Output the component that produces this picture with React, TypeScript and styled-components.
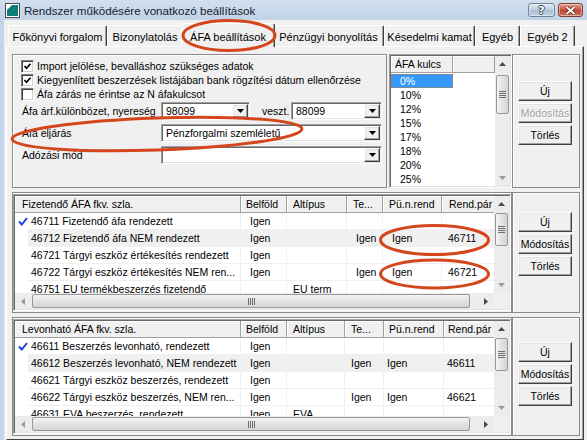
import React from 'react';
import styled, { createGlobalStyle, css } from 'styled-components';

const GlobalStyle = createGlobalStyle`
  html, body {
    margin: 0;
    padding: 0;
    background: #f0f0f0;
  }
  body {
    font-family: "Liberation Sans", Arial, sans-serif;
    font-size: 10.5px;
    color: #000;
  }
  * {
    box-sizing: border-box;
  }
`;

const sunken = css`
  border: 1px solid;
  border-color: #a0a0a0 #ffffff #ffffff #a0a0a0;
  box-shadow: inset 1px 1px #696969, inset -1px -1px #e3e3e3;
  padding: 1px;
`;

const raised = css`
  border: 1px solid;
  border-color: #ffffff #404040 #404040 #ffffff;
  box-shadow: inset -1px -1px #a0a0a0, inset 1px 1px #e3e3e3;
`;

const Frame = styled.div`
  position: relative;
  width: 587px;
  height: 440px;
  overflow: hidden;
  display: flex;
  flex-direction: column;
  background: #f0f0f0;
`;

const TitleBar = styled.div`
  flex: none;
  height: 20px;
  display: flex;
  align-items: center;
  padding: 0 4px 0 5px;
  background: linear-gradient(#d2dfee, #c1d2e7);
`;

const Title = styled.div`
  flex: 1;
  margin-left: 4px;
  font-size: 11.6px;
  color: #141e30;
  white-space: nowrap;
`;

const CaptionButtons = styled.div`
  display: flex;
  gap: 3px;
  align-self: flex-start;
  margin-top: 3px;
`;

const CaptionButton = styled.div<{ $close?: boolean }>`
  width: ${p => (p.$close ? 25 : 27)}px;
  height: 14px;
  border-radius: 3px;
  display: flex;
  align-items: center;
  justify-content: center;
  border: 1px solid ${p => (p.$close ? '#7d3b34' : '#6f8299')};
  background: ${p =>
    p.$close
      ? 'linear-gradient(#e39d8d, #c9553f 50%, #bd4530 51%, #d3735c)'
      : 'linear-gradient(#dfe8f2, #bccde0 50%, #a9bdd4 51%, #c3d3e5)'};
  box-shadow: inset 0 0 0 1px rgba(255, 255, 255, 0.45);
`;

const HelpGlyph = styled.span`
  font-family: "DejaVu Sans", sans-serif;
  font-weight: bold;
  font-size: 11px;
  line-height: 11px;
  color: #fff;
  text-shadow: 1px 0 #3b4a5e, -1px 0 #3b4a5e, 0 1px #3b4a5e, 0 -1px #3b4a5e;
`;

const Client = styled.div`
  flex: 1;
  min-height: 0;
  display: flex;
  flex-direction: column;
  border-left: 4px solid #c3d5ea;
  padding-left: 2px;
`;

const TabStrip = styled.div`
  flex: none;
  height: 26px;
  display: flex;
  align-items: flex-end;
  padding-left: 2px;
  position: relative;
  z-index: 2;
`;

const Tab = styled.div<{ $w: number; $active?: boolean }>`
  flex: none;
  width: ${p => p.$w}px;
  height: ${p => (p.$active ? 24 : 21)}px;
  margin: 0 ${p => (p.$active ? -2 : 0)}px ${p => (p.$active ? -1 : 0)}px;
  padding-top: 2px;
  display: flex;
  align-items: center;
  justify-content: center;
  white-space: nowrap;
  font-size: 11px;
  background: #f0f0f0;
  border-top: 1px solid #fff;
  border-left: 1px solid #fff;
  border-right: 1px solid #404040;
  border-radius: 2px 2px 0 0;
  box-shadow: inset -1px 0 #a0a0a0;
  position: relative;
  z-index: ${p => (p.$active ? 2 : 1)};
`;

const TabPage = styled.div`
  flex: 1;
  width: 578px;
  display: flex;
  flex-direction: column;
  gap: 4px;
  padding: 7px 3px 0 5px;
  border: 1px solid;
  border-color: #fff #404040 #404040 #fff;
  box-shadow: inset -1px 0 #a0a0a0;
  position: relative;
  z-index: 1;
`;

const Section = styled.div<{ $h: number }>`
  flex: none;
  height: ${p => p.$h}px;
  display: flex;
`;

const Panel = styled.div<{ $w?: number }>`
  ${p => (p.$w ? `width: ${p.$w}px; flex: none;` : 'flex: 1;')}
  border: 1px solid #8a8a8a;
  box-shadow: inset 1px 1px #fff;
`;

const SettingsPanel = styled(Panel)`
  margin-right: 2px;
  padding: 4px 0 0 8px;
  display: flex;
  flex-direction: column;
`;

const CheckRow = styled.div`
  height: 14px;
  display: flex;
  align-items: center;
  gap: 3px;
  white-space: nowrap;
`;

const CheckBox = styled.div`
  width: 13px;
  height: 13px;
  flex: none;
  background: #fff;
  border: 1px solid;
  border-color: #808080 #fff #fff #808080;
  box-shadow: inset 1px 1px #404040, inset -1px -1px #d4d0c8;
  display: flex;
  align-items: center;
  justify-content: center;
`;

const FieldRows = styled.div`
  margin-top: 1px;
  display: flex;
  flex-direction: column;
  gap: 4px;
`;

const FieldRow = styled.div`
  height: 18px;
  display: flex;
  align-items: center;
  white-space: nowrap;
`;

const FieldLabel = styled.div<{ $w: number; $indent?: number }>`
  width: ${p => p.$w}px;
  flex: none;
  padding-left: ${p => p.$indent ?? 1}px;
`;

const Combo = styled.div<{ $w: number }>`
  width: ${p => p.$w}px;
  height: 18px;
  flex: none;
  ${sunken};
  background: #fff;
  display: flex;
  align-items: stretch;
`;

const ComboText = styled.div`
  flex: 1;
  padding-left: 3px;
  line-height: 14px;
  overflow: hidden;
  white-space: nowrap;
`;

const ComboButton = styled.div`
  width: 16px;
  flex: none;
  background: #f0f0f0;
  ${raised};
  display: flex;
  align-items: center;
  justify-content: center;
`;

const ListBox = styled.div`
  width: 123px;
  flex: none;
  ${sunken};
  background: #fff;
  display: flex;
`;

const ListViewport = styled.div`
  flex: 1;
  overflow: hidden;
  min-width: 0;
`;

const ListItems = styled.div`
  padding-top: 1px;
`;

const ListScroll = styled.div`
  width: 15px;
  flex: none;
  display: flex;
`;

const HeaderRow = styled.div<{ $cols: string }>`
  display: grid;
  grid-template-columns: ${p => p.$cols};
  height: 17px;
  width: max-content;
`;

const HeaderCell = styled.div<{ $pad: number; $span?: number }>`
  ${p => (p.$span ? `grid-column: span ${p.$span};` : '')}
  background: #f0f0f0;
  border-right: 1px solid #a0a0a0;
  border-bottom: 1px solid #a0a0a0;
  box-shadow: inset 1px 1px #fff;
  padding-left: ${p => p.$pad}px;
  line-height: 16px;
  white-space: nowrap;
  overflow: hidden;
`;

const ListItem = styled.div<{ $selected?: boolean }>`
  width: 62px;
  height: 14px;
  line-height: 12px;
  padding-left: 8px;
  border: 1px ${p => (p.$selected ? 'dotted #d37c2f' : 'solid transparent')};
  background: ${p => (p.$selected ? '#3399ff' : 'transparent')};
  color: ${p => (p.$selected ? '#fff' : '#000')};
`;

const ButtonPanel = styled(Panel)<{ $top: number }>`
  padding: ${p => p.$top}px 0 0 5px;
  display: flex;
  flex-direction: column;
  gap: 2px;
`;

const Button = styled.div<{ $disabled?: boolean }>`
  width: 54px;
  height: 20px;
  background: #f0f0f0;
  ${raised};
  display: flex;
  align-items: center;
  justify-content: center;
  white-space: nowrap;
  color: ${p => (p.$disabled ? '#a0a0a0' : '#000')};
  text-shadow: ${p => (p.$disabled ? '1px 1px #fff' : 'none')};
`;

const GridPanel = styled(Panel)`
  padding: 1px 0;
  display: flex;
`;

const GridBox = styled.div`
  flex: 1;
  ${sunken};
  display: grid;
  grid-template-columns: minmax(0, 1fr) 15px;
  grid-template-rows: minmax(0, 1fr) 16px;
  background: #fff;
`;

const GridViewport = styled.div`
  overflow: hidden;
  min-width: 0;
  min-height: 0;
  background: #fff;
`;

const DataRow = styled.div<{ $cols: string }>`
  display: grid;
  grid-template-columns: ${p => p.$cols};
  height: 17px;
  width: max-content;
`;

const DataCell = styled.div<{ $pad: number; $shade?: boolean }>`
  padding-left: ${p => p.$pad}px;
  line-height: 16px;
  white-space: nowrap;
  overflow: hidden;
  background: ${p => (p.$shade ? '#f0f0f0' : '#fff')};
  border-right: 1px solid #f0f0f0;
  border-bottom: 1px solid #f0f0f0;
`;

const Indicator = styled.div`
  display: flex;
  align-items: center;
  justify-content: center;
  padding-left: 2px;
`;

const ScrollTrack = styled.div<{ $vertical?: boolean }>`
  flex: 1;
  display: flex;
  flex-direction: ${p => (p.$vertical ? 'column' : 'row')};
  background: #ececec;
  min-width: 0;
  min-height: 0;
`;

const ScrollArrow = styled.div<{ $vertical?: boolean }>`
  flex: none;
  ${p => (p.$vertical ? 'height: 16px;' : 'width: 16px;')}
  display: flex;
  align-items: center;
  justify-content: center;
`;

const ScrollSpace = styled.div`
  flex: 1;
`;

const Thumb = styled.div<{ $vertical?: boolean; $offset: number; $size: number }>`
  flex: none;
  ${p =>
    p.$vertical
      ? `height: ${p.$size}px; margin: ${p.$offset}px 0 0 1px; width: 13px;
         background: linear-gradient(to right, #f4f4f4, #e2e2e2 50%, #d4d4d4);`
      : `width: ${p.$size}px; margin: 1px 0 0 ${p.$offset}px; height: 14px;
         background: linear-gradient(#f4f4f4, #e2e2e2 50%, #d4d4d4);`}
  border: 1px solid #979797;
  border-radius: 2px;
  display: flex;
  align-items: center;
  justify-content: center;
`;

const Corner = styled.div`
  background: #f0f0f0;
`;

const Annotations = styled.svg`
  position: absolute;
  left: 0;
  top: 0;
  pointer-events: none;
  z-index: 10;
`;

type Col = { title: string; w: number; pad: number; hpad: number };
type Row = { cells: string[]; check?: boolean; shade?: boolean };

const midCols: Col[] = [
  { title: 'Fizetendő ÁFA fkv. szla.', w: 213, pad: 3, hpad: 7 },
  { title: 'Belföld', w: 46, pad: 9, hpad: 5 },
  { title: 'Altípus', w: 60, pad: 6, hpad: 6 },
  { title: 'Te...', w: 36, pad: 9, hpad: 6 },
  { title: 'Pü.n.rend', w: 59, pad: 9, hpad: 6 },
  { title: 'Rend.pár', w: 80, pad: 6, hpad: 7 },
];

const botCols: Col[] = [
  { title: 'Levonható ÁFA fkv. szla.', w: 213, pad: 3, hpad: 7 },
  { title: 'Belföld', w: 46, pad: 9, hpad: 5 },
  { title: 'Altípus', w: 58, pad: 6, hpad: 6 },
  { title: 'Te...', w: 39, pad: 6, hpad: 6 },
  { title: 'Pü.n.rend', w: 60, pad: 3, hpad: 5 },
  { title: 'Rend.pár', w: 80, pad: 3, hpad: 4 },
];

const midRows: Row[] = [
  { check: true, cells: ['46711 Fizetendő áfa rendezett', 'Igen', '', '', '', ''] },
  { shade: true, cells: ['46712 Fizetendő áfa NEM rendezett', 'Igen', '', 'Igen', 'Igen', '46711'] },
  { cells: ['46721 Tárgyi eszköz értékesítés rendezett', 'Igen', '', '', '', ''] },
  { cells: ['46722 Tárgyi eszköz értékesítés NEM ren...', 'Igen', '', 'Igen', 'Igen', '46721'] },
  { cells: ['46751 EU termékbeszerzés fizetendő', '', 'EU term', '', '', ''] },
];

const botRows: Row[] = [
  { check: true, cells: ['46611 Beszerzés levonható, rendezett', 'Igen', '', '', '', ''] },
  { shade: true, cells: ['46612 Beszerzés levonható, NEM rendezett', 'Igen', '', 'Igen', 'Igen', '46611'] },
  { cells: ['46621 Tárgyi eszköz beszerzés, rendezett', 'Igen', '', '', '', ''] },
  { cells: ['46622 Tárgyi eszköz beszerzés, NEM ren...', 'Igen', '', 'Igen', 'Igen', '46621'] },
  { cells: ['46631 EVA beszerzés, rendezett', 'Igen', 'EVA', '', '', ''] },
];

const tabs = [
  { label: 'Főkönyvi forgalom', w: 99 },
  { label: 'Bizonylatolás', w: 76 },
  { label: 'ÁFA beállítások', w: 94, active: true },
  { label: 'Pénzügyi bonyolítás', w: 111 },
  { label: 'Késedelmi kamat', w: 91 },
  { label: 'Egyéb', w: 45 },
  { label: 'Egyéb 2', w: 55 },
];

const rates = ['0%', '10%', '12%', '15%', '17%', '18%', '20%', '25%'];

const Arrow: React.FC<{ dir: 'up' | 'down' | 'left' | 'right'; color?: string }> = ({ dir, color = '#4a4a4a' }) => {
  const pts = {
    up: '0,4 7,4 3.5,0',
    down: '0,0 7,0 3.5,4',
    left: '4,0 4,7 0,3.5',
    right: '0,0 0,7 4,3.5',
  }[dir];
  const vertical = dir === 'up' || dir === 'down';
  return (
    <svg width={vertical ? 7 : 4} height={vertical ? 4 : 7} viewBox={vertical ? '0 0 7 4' : '0 0 4 7'}>
      <polygon points={pts} fill={color} />
    </svg>
  );
};

const Grip: React.FC<{ vertical?: boolean }> = ({ vertical }) =>
  vertical ? (
    <svg width="7" height="7" viewBox="0 0 7 7">
      {[0.5, 2.5, 4.5, 6.5].map(y => (
        <line key={y} x1="0" x2="7" y1={y} y2={y} stroke="#6e6e6e" strokeWidth="1" />
      ))}
    </svg>
  ) : (
    <svg width="7" height="7" viewBox="0 0 7 7">
      {[0.5, 2.5, 4.5, 6.5].map(x => (
        <line key={x} y1="0" y2="7" x1={x} x2={x} stroke="#6e6e6e" strokeWidth="1" />
      ))}
    </svg>
  );

const VScroll: React.FC<{ offset: number; size: number }> = ({ offset, size }) => (
  <ScrollTrack $vertical>
    <ScrollArrow $vertical>
      <Arrow dir="up" />
    </ScrollArrow>
    <Thumb $vertical $offset={offset} $size={size}>
      <Grip vertical />
    </Thumb>
    <ScrollSpace />
    <ScrollArrow $vertical>
      <Arrow dir="down" color="#9a9a9a" />
    </ScrollArrow>
  </ScrollTrack>
);

const HScroll: React.FC = () => (
  <ScrollTrack>
    <ScrollArrow>
      <Arrow dir="left" color="#9a9a9a" />
    </ScrollArrow>
    <Thumb $offset={1} $size={438}>
      <Grip />
    </Thumb>
    <ScrollSpace />
    <ScrollArrow>
      <Arrow dir="right" />
    </ScrollArrow>
  </ScrollTrack>
);

const CheckMark: React.FC = () => (
  <svg width="9" height="9" viewBox="0 0 9 9">
    <path d="M1.5 4 L3.5 6.2 L7.5 1.8" fill="none" stroke="#000" strokeWidth="1.7" />
  </svg>
);

const BlueCheck: React.FC = () => (
  <svg width="10" height="9" viewBox="0 0 10 9">
    <path d="M1 4.5 L3.8 7.5 L9 1" fill="none" stroke="#1f3fe0" strokeWidth="2" />
  </svg>
);

const DataGrid: React.FC<{ cols: Col[]; rows: Row[]; thumb: number }> = ({ cols, rows, thumb }) => {
  const template = ['13px', ...cols.map(c => `${c.w}px`)].join(' ');
  return (
    <GridBox>
      <GridViewport>
        <HeaderRow $cols={template}>
          {cols.map((c, i) => (
            <HeaderCell key={c.title} $pad={c.hpad} $span={i === 0 ? 2 : undefined}>
              {c.title}
            </HeaderCell>
          ))}
        </HeaderRow>
        {rows.map((r, ri) => (
          <DataRow key={ri} $cols={template}>
            <Indicator>{r.check && <BlueCheck />}</Indicator>
            {r.cells.map((v, ci) => (
              <DataCell key={ci} $pad={cols[ci].pad} $shade={r.shade}>
                {v}
              </DataCell>
            ))}
          </DataRow>
        ))}
      </GridViewport>
      <VScroll offset={thumb} size={33} />
      <HScroll />
      <Corner />
    </GridBox>
  );
};

const ActionButtons: React.FC<{ top: number; editDisabled?: boolean }> = ({ top, editDisabled }) => (
  <ButtonPanel $top={top}>
    <Button>Új</Button>
    <Button $disabled={editDisabled}>Módosítás</Button>
    <Button>Törlés</Button>
  </ButtonPanel>
);

const AppIcon: React.FC = () => (
  <svg width="15" height="15" viewBox="0 0 15 15">
    <rect x="0.5" y="0.5" width="14" height="14" fill="#ffffff" stroke="#4a4a4a" />
    <rect x="2" y="2" width="11" height="11" fill="#0b7c78" />
    <polygon points="2,2 7,2 2,7" fill="#ffffff" />
  </svg>
);

const DropCombo: React.FC<{ w: number; value?: string }> = ({ w, value }) => (
  <Combo $w={w}>
    <ComboText>{value}</ComboText>
    <ComboButton>
      <Arrow dir="down" color="#000" />
    </ComboButton>
  </Combo>
);

const App: React.FC = () => {
  return (
    <>
      <GlobalStyle />
      <Frame>
        <TitleBar>
          <AppIcon />
          <Title>Rendszer működésére vonatkozó beállítások</Title>
          <CaptionButtons>
            <CaptionButton>
              <HelpGlyph>?</HelpGlyph>
            </CaptionButton>
            <CaptionButton $close>
              <svg width="11" height="9" viewBox="0 0 11 9">
                <path d="M1.5 1 L9.5 8 M9.5 1 L1.5 8" stroke="#5a1f18" strokeWidth="3.4" />
                <path d="M1.5 1 L9.5 8 M9.5 1 L1.5 8" stroke="#ffffff" strokeWidth="1.8" />
              </svg>
            </CaptionButton>
          </CaptionButtons>
        </TitleBar>

        <Client>
          <TabStrip>
            {tabs.map(t => (
              <Tab key={t.label} $w={t.w} $active={t.active}>
                {t.label}
              </Tab>
            ))}
          </TabStrip>

          <TabPage>
            <Section $h={134}>
              <SettingsPanel $w={375}>
                <CheckRow>
                  <CheckBox>
                    <CheckMark />
                  </CheckBox>
                  Import jelölése, bevalláshoz szükséges adatok
                </CheckRow>
                <CheckRow>
                  <CheckBox>
                    <CheckMark />
                  </CheckBox>
                  Kiegyenlített beszerzések listájában bank rögzítési dátum ellenőrzése
                </CheckRow>
                <CheckRow>
                  <CheckBox />
                  Áfa zárás ne érintse az N áfakulcsot
                </CheckRow>
                <FieldRows>
                  <FieldRow>
                    <FieldLabel $w={140}>Áfa árf.különbözet, nyereség</FieldLabel>
                    <DropCombo w={89} value="98099" />
                    <FieldLabel $w={41} $indent={12}>
                      veszt.
                    </FieldLabel>
                    <DropCombo w={91} value="88099" />
                  </FieldRow>
                  <FieldRow>
                    <FieldLabel $w={140}>Áfa eljárás</FieldLabel>
                    <DropCombo w={221} value="Pénzforgalmi szemléletű" />
                  </FieldRow>
                  <FieldRow>
                    <FieldLabel $w={140}>Adózási mód</FieldLabel>
                    <DropCombo w={221} />
                  </FieldRow>
                </FieldRows>
              </SettingsPanel>

              <ListBox>
                <ListViewport>
                  <HeaderRow $cols="62px 42px">
                    <HeaderCell $pad={4}>ÁFA kulcs</HeaderCell>
                    <HeaderCell $pad={4} />
                  </HeaderRow>
                  <ListItems>
                    {rates.map((r, i) => (
                      <ListItem key={r} $selected={i === 0}>
                        {r}
                      </ListItem>
                    ))}
                  </ListItems>
                </ListViewport>
                <ListScroll>
                  <VScroll offset={3} size={39} />
                </ListScroll>
              </ListBox>

              <ActionButtons top={26} editDisabled />
            </Section>

            <Section $h={121}>
              <GridPanel $w={500}>
                <DataGrid cols={midCols} rows={midRows} thumb={1} />
              </GridPanel>
              <ActionButtons top={19} />
            </Section>

            <Section $h={119}>
              <GridPanel $w={500}>
                <DataGrid cols={botCols} rows={botRows} thumb={1} />
              </GridPanel>
              <ActionButtons top={24} />
            </Section>
          </TabPage>
        </Client>

        <Annotations width="587" height="440" viewBox="0 0 587 440">
          <g fill="none" stroke="#d4461c" strokeWidth="3">
            <ellipse cx="229" cy="35.5" rx="46" ry="15" />
            <ellipse cx="157" cy="134" rx="145" ry="16" transform="rotate(-2 157 134)" />
            <ellipse cx="434.5" cy="240" rx="54" ry="14.5" />
            <ellipse cx="434.5" cy="274" rx="54" ry="14" />
          </g>
        </Annotations>
      </Frame>
    </>
  );
};

export default App;
